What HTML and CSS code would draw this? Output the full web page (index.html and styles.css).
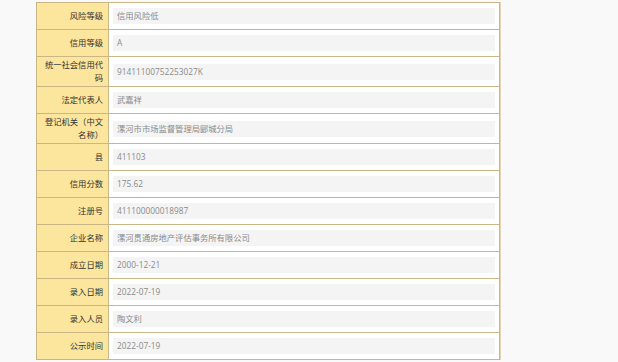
FILE: index.html
```html
<!DOCTYPE html>
<html lang="zh-CN">
<head>
<meta charset="utf-8">
<link rel="stylesheet" href="styles.css">
</head>
<body>
<div class="page">
<table class="info">
<tbody>
<tr><th>风险等级</th><td><div class="val">信用风险低</div></td></tr>
<tr><th>信用等级</th><td><div class="val">A</div></td></tr>
<tr><th>统一社会信用代码</th><td><div class="val">91411100752253027K</div></td></tr>
<tr><th>法定代表人</th><td><div class="val">武嘉祥</div></td></tr>
<tr><th>登记机关（中文名称）</th><td><div class="val">漯河市市场监督管理局郾城分局</div></td></tr>
<tr><th>县</th><td><div class="val">411103</div></td></tr>
<tr><th>信用分数</th><td><div class="val">175.62</div></td></tr>
<tr><th>注册号</th><td><div class="val">411100000018987</div></td></tr>
<tr><th>企业名称</th><td><div class="val">漯河贯通房地产评估事务所有限公司</div></td></tr>
<tr><th>成立日期</th><td><div class="val">2000-12-21</div></td></tr>
<tr><th>录入日期</th><td><div class="val">2022-07-19</div></td></tr>
<tr><th>录入人员</th><td><div class="val">陶文利</div></td></tr>
<tr><th>公示时间</th><td><div class="val">2022-07-19</div></td></tr>
</tbody>
</table>
</div>
</body>
</html>
```
FILE: styles.css
```css
html, body {
  margin: 0;
  padding: 0;
  background: #f9f9f9;
}
.page {
  padding: 2px 0 0 36px;
  font-family: "Open Sans", "Noto Sans CJK SC", sans-serif;
  font-size: 8.3px;
}
.info {
  border-collapse: collapse;
  width: 464px;
  table-layout: fixed;
  box-shadow: 1px 0 0 #e2d5b6;
}
.info th, .info td {
  border: 1px solid #cbb685;
  padding: 0;
  vertical-align: middle;
}
.info th {
  width: 61px;
  padding: 2px 5px;
  background: #fce59c;
  color: #333;
  font-weight: normal;
  text-align: right;
  line-height: 12.5px;
}
.info td {
  background: #fff;
  padding: 0 4px;
}
.val {
  height: 16px;
  line-height: 16px;
  margin: 5px 0;
  padding: 0 4px;
  background: #f4f4f4;
  color: #8a8a8a;
  white-space: nowrap;
}
```
